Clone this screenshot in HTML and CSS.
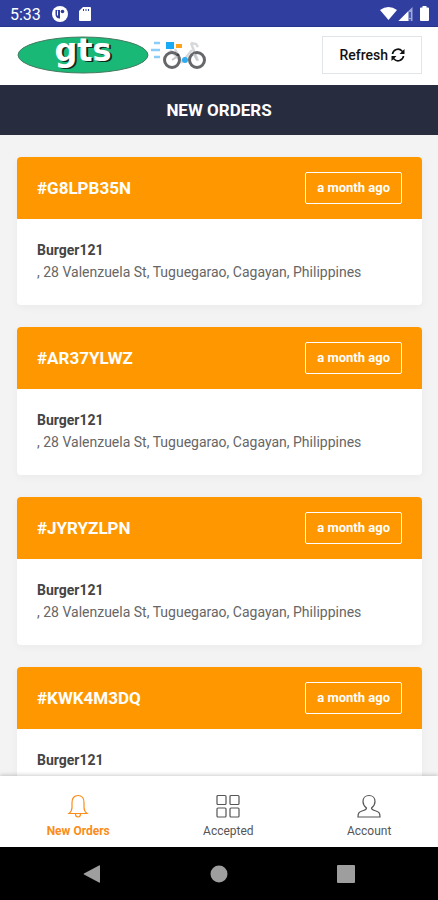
FILE: index.html
```html
<!DOCTYPE html>
<html lang="en">
<head>
<meta charset="utf-8">
<meta name="viewport" content="width=device-width, initial-scale=1">
<title>New Orders</title>
<link rel="stylesheet" href="styles.css">
</head>
<body>
<div class="status-bar">
  <span class="clock">5:33</span>
  <svg class="status-app" width="16" height="16" viewBox="0 0 16 16" aria-hidden="true"><circle cx="8" cy="8" r="8" fill="#fff"/><path d="M3.500 4H8v8.500H7A4.500 4.500 0 0 1 3.500 8z" fill="#303f9f"/><path d="M5.500 4.500v5" stroke="#fff"/><circle cx="10.500" cy="5.500" r="1.800" fill="#303f9f"/></svg>
  <svg class="status-card" width="12" height="14" viewBox="0 0 12 14" aria-hidden="true"><path d="M4 0h7a1 1 0 0 1 1 1v12a1 1 0 0 1-1 1H1a1 1 0 0 1-1-1V4z" fill="#fff"/><path d="M4.500 2v2M7 2v2M9.500 2v2" stroke="#303f9f"/></svg>
  <svg class="status-signals" width="50" height="16" viewBox="0 0 50 16" aria-hidden="true"><path d="M0 4Q8.500-2 17 4L8.500 14z" fill="#fff"/><path d="M32.500 1v14h-14z" fill="#9fa8da"/><path d="M28 5.500V15h-9.500z" fill="#fff"/><path d="M30 6v6M30 13v2" stroke="#303f9f" stroke-width="1.500"/><path d="M42.500 0h4v1.500H48a1 1 0 0 1 1 1V14a1 1 0 0 1-1 1h-7a1 1 0 0 1-1-1V2.500a1 1 0 0 1 1-1h1.500z" fill="#fff"/></svg>
</div>
<header class="header">
  <svg class="logo" width="192" height="48" viewBox="0 -4 192 48" role="img" aria-label="gts delivery">
    <ellipse cx="66" cy="20" rx="65" ry="18" fill="#19b877" stroke="#467b60"/>
    <text class="logo-text" x="66" y="26" text-anchor="middle">gts</text>
    <path d="M137 8h6M134 15h9M137 22h6" stroke="#8bcdfa" stroke-width="2.500"/>
    <path d="M149 7h8v7h-8z" fill="#18aaf5"/><path d="M159 9h6v4h-6z" fill="#ffa31a"/>
    <g fill="none"><path d="M153 15l12 12 10-12M158 14l6 12M174 8l7 18M174 8l5 1 2 3" stroke="#d6d8da" stroke-width="2.500"/><circle cx="155" cy="25" r="7.500" stroke="#66676a" stroke-width="3"/><circle cx="180" cy="25" r="7.500" stroke="#66676a" stroke-width="3"/><path d="M155 25l6-4M180 25l-3-6" stroke="#c5c8ca" stroke-width="2"/></g>
    <circle cx="161" cy="20" r="1.500" fill="#444"/><circle cx="168" cy="25" r="3" fill="#2eacf2"/>
  </svg>
  <button class="refresh" type="button">Refresh <svg width="14" height="14" viewBox="0 0 14 14" fill="none" aria-hidden="true"><path d="M1.500 6a5.500 5.500 0 0 1 9.500-3l1 1M12.500 8a5.500 5.500 0 0 1-9.500 3l-1-1" stroke="#111" stroke-width="1.700"/><path d="M13.500 1v5h-5zM.5 13V8h5z" fill="#111"/></svg></button>
</header>
<h1 class="title">NEW ORDERS</h1>
<main class="orders">
  <article class="card"><header class="card-head"><h2>#G8LPB35N</h2><time>a month ago</time></header><div class="card-body"><h3>Burger121</h3><p>, 28 Valenzuela St, Tuguegarao, Cagayan, Philippines</p></div></article>
  <article class="card"><header class="card-head"><h2>#AR37YLWZ</h2><time>a month ago</time></header><div class="card-body"><h3>Burger121</h3><p>, 28 Valenzuela St, Tuguegarao, Cagayan, Philippines</p></div></article>
  <article class="card"><header class="card-head"><h2>#JYRYZLPN</h2><time>a month ago</time></header><div class="card-body"><h3>Burger121</h3><p>, 28 Valenzuela St, Tuguegarao, Cagayan, Philippines</p></div></article>
  <article class="card"><header class="card-head"><h2>#KWK4M3DQ</h2><time>a month ago</time></header><div class="card-body"><h3>Burger121</h3></div></article>
</main>
<nav class="tabs">
  <a class="tab active" href="#new"><svg width="24" height="24" viewBox="0 0 24 24" aria-hidden="true"><path d="M3 19.500c2.500-2 3-3.500 3-6V8.500C6 4 8.500 1.500 12 1.500s6 2.500 6 7v5c0 2.500.5 4 3 6zM9.500 20c0 4 5 4 5 0"/></svg>New Orders</a>
  <a class="tab" href="#accepted"><svg width="24" height="24" viewBox="0 0 24 24" aria-hidden="true"><rect x="1" y="1.500" width="9" height="9" rx="1"/><rect x="14" y="1.500" width="9" height="9" rx="1"/><rect x="1" y="14" width="9" height="9" rx="1"/><rect x="14" y="14" width="9" height="9" rx="1"/></svg>Accepted</a>
  <a class="tab" href="#account"><svg width="24" height="24" viewBox="0 0 24 24" aria-hidden="true"><path d="M1 23c0-4 1-5 4-6 3-1 4.500-1 4.500-3C7 12 6 10 6 7.500 6 4 8.500 1.500 12 1.500S18 4 18 7.500c0 2.500-1 4.500-3.500 6.500 0 2 1.500 2 4.500 3s4 2 4 6z"/></svg>Account</a>
</nav>
<div class="system-nav">
  <button type="button" aria-label="Back"><svg width="18" height="18" viewBox="0 0 18 18"><path d="M17 1v16q0 1-1 .5L1 9.500Q0 9 1 8.500L16 .5q1-.5 1 .5z"/></svg></button>
  <button type="button" aria-label="Home"><svg width="18" height="18" viewBox="0 0 18 18"><circle cx="9" cy="9" r="8.500"/></svg></button>
  <button type="button" aria-label="Recent apps"><svg width="18" height="18" viewBox="0 0 18 18"><rect width="18" height="18" rx="1"/></svg></button>
</div>
</body>
</html>
```
FILE: styles.css
```css
* { box-sizing: border-box; }
body {
  margin: 0;
  height: 100vh;
  display: flex;
  flex-direction: column;
  overflow: hidden;
  background: #f3f3f3;
  color: #444;
  font-family: Roboto, sans-serif;
}
h1, h2, h3, p { margin: 0; }
svg { display: block; flex: none; }
button { font-family: inherit; cursor: pointer; }

.status-bar {
  flex: none;
  display: flex;
  align-items: center;
  height: 27px;
  padding: 2px 8px 0 10px;
  background: #303f9f;
  border-bottom: 1px solid #26348c;
  color: #fff;
  font-size: 16px;
}
.status-app { margin-left: 11px; }
.status-card { margin-left: 11px; }
.status-signals { margin-left: auto; }

.header {
  flex: none;
  display: flex;
  align-items: center;
  justify-content: space-between;
  height: 58px;
  padding: 0 16px 2px 17px;
  background: #fff;
}
.logo-text {
  fill: #fff;
  font: bold 32px "DejaVu Sans", sans-serif;
  text-shadow: 2px 1px 0 #10291e;
}
.refresh {
  display: flex;
  align-items: center;
  gap: 3px;
  height: 38px;
  padding: 0 16px;
  border: 1px solid #e2e5e7;
  background: #fff;
  color: #111;
  font-size: 14px;
  font-weight: 500;
}

.title {
  flex: none;
  background: #282c3f;
  color: #fff;
  font-size: 17px;
  font-weight: 700;
  line-height: 50px;
  text-align: center;
}

.orders {
  flex: 1;
  min-height: 0;
  overflow: hidden;
  padding: 22px 16px 0 17px;
}
.card {
  min-height: 148px;
  margin-bottom: 22px;
  border-radius: 4px;
  overflow: hidden;
  background: #fff;
  box-shadow: 0 2px 8px rgba(0, 0, 0, 0.04);
}
.card-head {
  display: flex;
  align-items: center;
  justify-content: space-between;
  height: 62px;
  padding: 0 20px;
  background: #ff9800;
  color: #fff;
}
.card-head h2 { font-size: 17px; font-weight: 700; }
.card-head time {
  padding: 0 11px;
  border: 1px solid #fff;
  border-radius: 2px;
  font-size: 13px;
  font-weight: 700;
  line-height: 30px;
}
.card-body { padding: 20px; line-height: 22px; }
.card-body h3 { font-size: 14px; font-weight: 700; }
.card-body p { font-size: 14px; color: #666; }

.tabs {
  position: relative;
  flex: none;
  display: flex;
  justify-content: space-around;
  height: 71px;
  padding-top: 18px;
  background: #fff;
  box-shadow: 0 -1px 4px rgba(0, 0, 0, 0.2);
}
.tab {
  display: flex;
  flex-direction: column;
  align-items: center;
  gap: 4px;
  color: #555;
  font-size: 12px;
  line-height: 18px;
  text-decoration: none;
}
.tab svg { fill: none; stroke: currentColor; stroke-width: 1.2; }
.tab.active { color: #fb8c1a; font-weight: 700; }

.system-nav {
  position: relative;
  flex: none;
  display: grid;
  grid-template-columns: repeat(3, 1fr);
  height: 53px;
  padding: 0 28px;
  background: #000;
}
.system-nav button {
  display: grid;
  place-items: center;
  padding: 0;
  border: 0;
  background: none;
}
.system-nav svg { fill: #9e9e9e; }
```
